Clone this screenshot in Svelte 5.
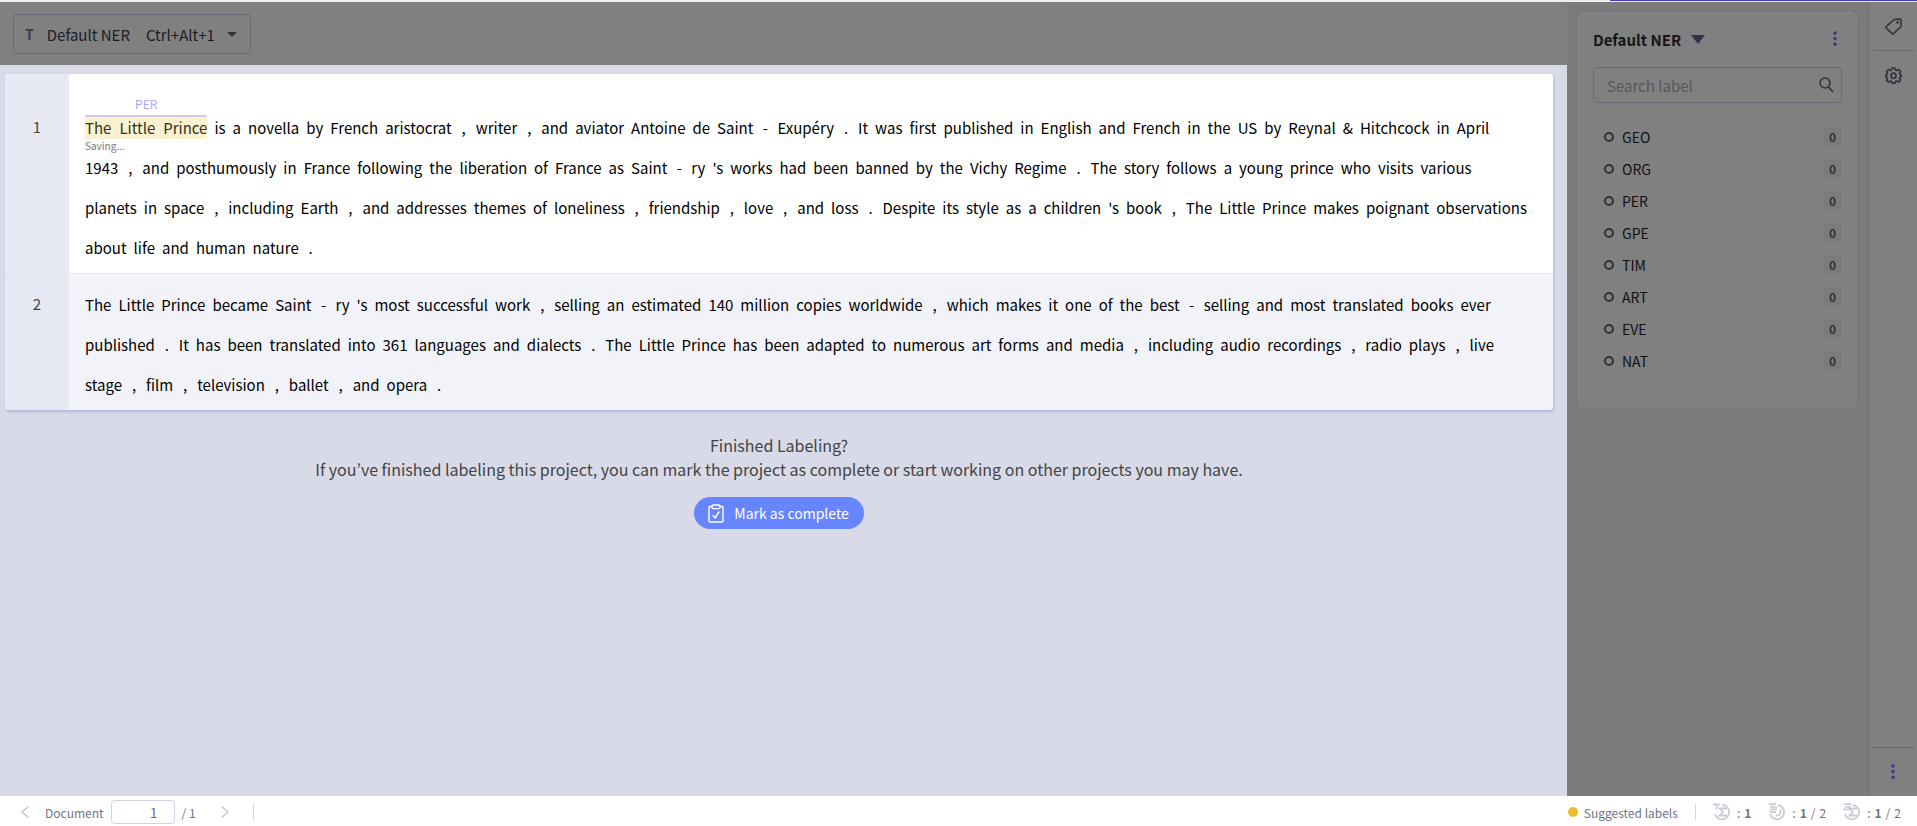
<script lang="ts">
  const rows = [
    {
      id: 1,
      entity: { tag: "PER", text: "The Little Prince", status: "Saving..." },
      lines: [
        "is a novella by French aristocrat , writer , and aviator Antoine de Saint - Exupéry . It was first published in English and French in the US by Reynal & Hitchcock in April",
        "1943 , and posthumously in France following the liberation of France as Saint - ry 's works had been banned by the Vichy Regime . The story follows a young prince who visits various",
        "planets in space , including Earth , and addresses themes of loneliness , friendship , love , and loss . Despite its style as a children 's book , The Little Prince makes poignant observations",
        "about life and human nature .",
      ],
    },
    {
      id: 2,
      entity: null,
      lines: [
        "The Little Prince became Saint - ry 's most successful work , selling an estimated 140 million copies worldwide , which makes it one of the best - selling and most translated books ever",
        "published . It has been translated into 361 languages and dialects . The Little Prince has been adapted to numerous art forms and media , including audio recordings , radio plays , live",
        "stage , film , television , ballet , and opera .",
      ],
    },
  ];

  const labels = ["GEO", "ORG", "PER", "GPE", "TIM", "ART", "EVE", "NAT"].map(
    (name) => ({ name, count: 0 })
  );

  let search = $state("");
  let page = $state("1");
  let selected = $state("");

  const visible = $derived(
    labels.filter((l) => l.name.toLowerCase().includes(search.toLowerCase()))
  );

  function isPunct(token: string) {
    return [",", ".", "-"].includes(token);
  }
</script>

{#snippet dots()}
  <svg width="4" height="16" viewBox="0 0 4 16" fill="currentColor">
    <circle cx="2" cy="2" r="1.8" />
    <circle cx="2" cy="7.6" r="1.8" />
    <circle cx="2" cy="13.2" r="1.8" />
  </svg>
{/snippet}

<div class="app">
  <div class="progress"><div class="progress-bar"></div></div>

  <div class="body">
    <main>
      <div class="toolbar">
        <button class="label-set">
          <span class="type">T</span>
          <span>Default NER</span>
          <span class="shortcut">Ctrl+Alt+1</span>
          <svg width="10" height="5" viewBox="0 0 10 5"><path d="M0 0h10L5 5z" fill="#333" /></svg>
        </button>
      </div>

      <div class="document">
        <div class="sentences">
          {#each rows as row}
            <div class="row" class:tagged={row.entity}>
              <div class="number">{row.id}</div>
              <div class="text">
                {#each row.lines as line, i}
                  <div class="line">
                    {#if row.entity && i === 0}
                      <span class="entity">
                        <span class="tag">{row.entity.tag}</span>
                        {#each row.entity.text.split(" ") as token}
                          <span>{token}</span>
                        {/each}
                        <span class="status">{row.entity.status}</span>
                      </span>
                    {/if}
                    {#each line.split(" ") as token}
                      <span class:punct={isPunct(token)}>{token}</span>
                    {/each}
                  </div>
                {/each}
              </div>
            </div>
          {/each}
        </div>

        <div class="finished">
          <div>Finished Labeling?</div>
          <div>
            If you’ve finished labeling this project, you can mark the project as complete or start
            working on other projects you may have.
          </div>
          <button class="complete">
            <svg width="16" height="19" viewBox="0 0 16 19" fill="none" stroke="#fff" stroke-width="1.4" stroke-linejoin="round" stroke-linecap="round">
              <path d="M4 2.5H2a1 1 0 0 0-1 1V17a1 1 0 0 0 1 1h12a1 1 0 0 0 1-1V3.5a1 1 0 0 0-1-1h-2" />
              <rect x="4" y="1" width="8" height="3.6" rx="1.2" />
              <path d="M5 11.5 7 14l4-6" />
            </svg>
            Mark as complete
          </button>
        </div>
      </div>
    </main>

    <aside class="panel">
      <div class="panel-card">
        <div class="panel-head">
          <button class="panel-title">
            Default NER
            <svg width="14" height="9" viewBox="0 0 14 9"><path d="M0 0h14L7 9z" fill="#30334a" /></svg>
          </button>
          <button class="more" aria-label="More options">{@render dots()}</button>
        </div>

        <div class="search">
          <input type="text" aria-label="Search label" placeholder="Search label" bind:value={search} />
          <svg width="15" height="16" viewBox="0 0 15 16" fill="none" stroke="#30323f" stroke-width="1.5">
            <circle cx="6" cy="6" r="5" />
            <path d="M9.5 10 14 15" stroke-width="1.8" />
          </svg>
        </div>

        <div class="labels">
          {#each visible as label}
            <label class="label">
              <input type="radio" name="label" value={label.name} bind:group={selected} />
              <span class="name">{label.name}</span>
              <span class="count">{label.count}</span>
            </label>
          {/each}
        </div>
      </div>
    </aside>

    <nav class="rail">
      <button class="rail-button" aria-label="Labels">
        <svg width="17" height="17" viewBox="0 0 17 17" fill="none" stroke="#30323f" stroke-width="1.5" stroke-linejoin="round">
          <path d="M9 1.5 15 1a1 1 0 0 1 1 1v6.500L8.500 15.600a1 1 0 0 1-1.400 0L1.200 10a1 1 0 0 1 0-1.400z" />
          <circle cx="12.6" cy="4.4" r=".6" />
        </svg>
      </button>
      <button class="rail-button" aria-label="Settings">
        <svg width="17" height="17" viewBox="0 0 16 16" fill="none" stroke="#30323f" stroke-width="1.5" stroke-linejoin="round">
          <path d="M6.6 1h2.800l.5 1.900 1.100.5 1.700-1 2 2-1 1.600.4 1.100 1.300.4v1.400l-1.300.4-.4 1.500 1 1.300-2 2.100-1.700-1-1.100.5-.5 1.600H6.600l-.5-1.600-1.100-.5-1.700 1-2-2.100 1-1.300L1.900 9.300.7 8.900V7.500l1.200-.4.4-1.100-1-1.600 2-2 1.700 1 1.100-.5z" />
          <circle cx="8" cy="8.2" r="2.4" />
        </svg>
      </button>
      <button class="rail-button bottom" aria-label="More">{@render dots()}</button>
    </nav>
  </div>

  <footer>
    <button class="nav" aria-label="Previous document">
      <svg width="8" height="12" viewBox="0 0 8 12" fill="none" stroke="#c9c9c9" stroke-width="1.5"><path d="M7.5 .5 1 6l6.500 5.500" /></svg>
    </button>
    <label for="page">Document</label>
    <input id="page" class="page" type="text" bind:value={page} />
    <span class="total">/ 1</span>
    <button class="nav next" aria-label="Next document">
      <svg width="8" height="12" viewBox="0 0 8 12" fill="none" stroke="#c9c9c9" stroke-width="1.5"><path d="M.5 .5 7 6 .5 11.500" /></svg>
    </button>
    <span class="divider"></span>

    <div class="stats">
      <span class="suggested"><i class="dot"></i>Suggested labels</span>
      <span class="divider"></span>
      <span class="stat">
        <svg width="18" height="18" viewBox="0 0 18 18" fill="none" stroke="#cbccd8" stroke-width="1.8">
          <path d="M9 2a7.200 7.200 0 1 1-7 9M0 1.500h7M3.500 1.500V6.500" />
          <path d="M13 6.500V5.500H6.500L10 9l-3.500 3.500H13v-1" />
        </svg>
        <span class="value"><span>:</span><b>1</b></span>
      </span>
      <span class="stat">
        <svg width="18" height="18" viewBox="0 0 18 18" fill="none" stroke="#cbccd8" stroke-width="1.8">
          <path d="M10 2a7.200 7.200 0 1 1-8 9M1 1.200h7M2 3.800h7M2 6.400h7M2 9h6" />
          <path d="M12.500 6v3q0 3.500-4.500 3.500" />
        </svg>
        <span class="value"><span>:</span><b>1</b><span>/</span><span>2</span></span>
      </span>
      <span class="stat">
        <svg width="18" height="18" viewBox="0 0 18 18" fill="none" stroke="#cbccd8" stroke-width="1.8">
          <path d="M10 2a7.200 7.200 0 1 1-8 9M1 1.200h7M2 3.800h6M0 6.400h7" />
          <path d="M13 6.500V5.500H7L10 9l-3.500 3.500H13v-1" />
        </svg>
        <span class="value"><span>:</span><b>1</b><span>/</span><span>2</span></span>
      </span>
    </div>
  </footer>
</div>

<style>
  :global(body) {
    margin: 0;
    background: #fff;
  }
  .app {
    display: flex;
    flex-direction: column;
    min-height: 100vh;
    font-family: "Noto Sans CJK KR", "Noto Sans", sans-serif;
    font-size: 15px;
    color: #111;
  }
  button,
  input {
    font-family: inherit;
    font-size: inherit;
    box-sizing: border-box;
    margin: 0;
  }
  button {
    border: none;
    padding: 0;
    background: none;
    color: inherit;
    cursor: pointer;
  }
  svg {
    display: block;
    flex: none;
  }
  .progress {
    height: 2px;
    background: #eee;
  }
  .progress-bar {
    width: 16%;
    height: 1px;
    margin-left: auto;
    background: #4240b4;
  }
  .body {
    flex: 1;
    display: flex;
  }
  main {
    flex: 1;
    min-width: 0;
    display: flex;
    flex-direction: column;
  }
  .toolbar {
    padding: 12px 13px 11px;
    background: #808080;
  }
  .label-set {
    display: flex;
    align-items: center;
    height: 40px;
    padding: 0 13px 0 11px;
    border: 1px solid #6a6a77;
    border-radius: 4px;
    color: #1b1c28;
  }
  .type {
    margin-right: 13px;
    font-size: 14px;
    font-weight: bold;
    color: #383b4c;
  }
  .shortcut {
    margin: 0 12px 0 16px;
  }
  .document {
    flex: 1;
    padding: 9px 14px 0 5px;
    background: #d8dae8;
  }
  .sentences {
    overflow: hidden;
    border-radius: 4px;
    background: #fff;
    box-shadow: 1px 2px 3px #b4b5dc;
  }
  .row {
    display: flex;
    background: #f2f3f8;
  }
  .row.tagged {
    background: #fff;
    border-bottom: 1px solid #e2e4ea;
  }
  .number {
    width: 64px;
    padding-top: 10px;
    background: #e6e9f3;
    color: #444;
    line-height: 40px;
    text-align: center;
  }
  .text {
    flex: 1;
    min-width: 0;
    padding: 10px 16px 6px;
  }
  .tagged .text,
  .tagged .number {
    padding-top: 33px;
  }
  .line {
    display: flex;
    align-items: center;
    gap: 7px;
    height: 40px;
    white-space: nowrap;
    color: #000;
  }
  .punct {
    min-width: 10px;
    text-align: center;
  }
  .entity {
    position: relative;
    display: flex;
    gap: 8px;
    height: 22px;
    line-height: 22px;
    border-top: 2px solid #d0caeb;
    background: #fbf0d0;
    color: #33301c;
  }
  .tag,
  .status {
    position: absolute;
    left: 0;
    line-height: 12px;
  }
  .tag {
    right: 0;
    bottom: 29px;
    font-size: 12px;
    text-align: center;
    color: #a9a8f8;
  }
  .status {
    top: 23px;
    font-size: 10px;
    color: #777;
  }
  .finished {
    display: flex;
    flex-direction: column;
    align-items: center;
    padding-top: 23px;
    line-height: 24px;
    font-size: 16px;
    color: #444;
  }
  .complete {
    display: flex;
    align-items: center;
    gap: 10px;
    height: 32px;
    margin-top: 16px;
    padding: 0 15px 0 14px;
    border-radius: 16px;
    background: #6685ff;
    color: #fff;
    font-size: 14px;
  }
  .panel {
    width: 301px;
    box-sizing: border-box;
    padding: 8px 9px;
    background: #7b7b7b;
  }
  .panel-card {
    height: 400px;
    box-sizing: border-box;
    padding: 16px;
    border: 1px solid #757577;
    border-radius: 8px;
    background: #808080;
  }
  .panel-head {
    display: flex;
    align-items: center;
    justify-content: space-between;
    height: 24px;
  }
  .panel-title {
    display: flex;
    align-items: center;
    gap: 10px;
    font-weight: bold;
    color: #151515;
  }
  .more {
    margin-right: 5px;
    color: #333c85;
  }
  .search {
    position: relative;
    margin: 16px 0 18px;
  }
  .search input {
    display: block;
    width: 100%;
    height: 36px;
    padding: 0 40px 0 13px;
    border: 1px solid #696977;
    border-radius: 4px;
    background: transparent;
  }
  .search input::placeholder {
    color: #57575e;
    opacity: 1;
  }
  .search svg {
    position: absolute;
    right: 8px;
    top: 10px;
  }
  .label {
    display: flex;
    align-items: center;
    height: 32px;
    padding: 0 0 0 11px;
    font-size: 14px;
  }
  .label input {
    appearance: none;
    width: 10px;
    height: 10px;
    border: 2px solid #30323f;
    border-radius: 50%;
  }
  .name {
    flex: 1;
    margin-left: 8px;
  }
  .count {
    width: 19px;
    border-radius: 2px;
    background: #7b7b7b;
    color: #30323f;
    font-size: 12px;
    font-weight: bold;
    line-height: 18px;
    text-align: center;
  }
  .rail {
    width: 48px;
    display: flex;
    flex-direction: column;
    align-items: center;
    border-left: 1px solid #717173;
    background: #808080;
  }
  .rail-button {
    display: flex;
    align-items: center;
    justify-content: center;
    width: 40px;
    height: 49px;
  }
  .rail-button:first-child {
    border-bottom: 1px solid #696970;
  }
  .rail-button.bottom {
    margin-top: auto;
    border-top: 1px solid #696970;
    color: #333c85;
  }
  footer {
    display: flex;
    align-items: center;
    height: 30px;
    padding: 0 16px 0 21px;
    font-size: 12px;
    color: #6f7289;
    box-sizing: border-box;
    padding-top: 2px;
  }
  footer label {
    margin: 0 7px 0 16px;
  }
  .page {
    width: 64px;
    height: 24px;
    padding: 0 16px;
    border: 1px solid #d0d3e6;
    border-radius: 4px;
    font-size: 14px;
    text-align: right;
    color: #6f7289;
  }
  .total {
    margin-left: 7px;
  }
  .next {
    margin: 0 24px 0 25px;
  }
  .divider {
    width: 1px;
    height: 16px;
    background: #d4d5de;
  }
  .stats {
    display: flex;
    align-items: center;
    gap: 17px;
    margin-left: auto;
  }
  .suggested,
  .stat {
    display: flex;
    align-items: center;
    gap: 6px;
  }
  .value {
    display: flex;
    gap: 4px;
  }
  .dot {
    width: 10px;
    height: 10px;
    border-radius: 50%;
    background: #e9bc28;
  }
</style>
